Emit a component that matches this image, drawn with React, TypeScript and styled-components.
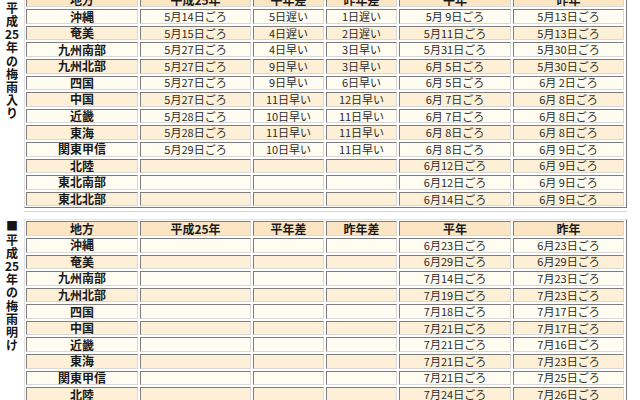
import React from 'react';
import styled, { createGlobalStyle } from 'styled-components';

type Tone = 'head' | 'light' | 'peach';

interface RowData {
  area: string;
  values: string[];
}

const GlobalStyle = createGlobalStyle`
  html, body {
    margin: 0;
    padding: 0;
    background: #ffffff;
  }
  body {
    font-family: "Noto Sans CJK JP", "Noto Sans", sans-serif;
    color: #222;
    overflow: hidden;
  }
`;

const Page = styled.div`
  display: flex;
  flex-direction: column;
  margin-top: -9.4px;
`;

const Section = styled.section<{ $gap?: number }>`
  display: flex;
  align-items: flex-start;
  margin-top: ${p => p.$gap ?? 0}px;
`;

const SideLabel = styled.div<{ $lift?: number }>`
  width: 24px;
  display: flex;
  flex-direction: column;
  align-items: center;
  margin-top: ${p => -(p.$lift ?? 0)}px;
  font-size: 12px;
  font-weight: bold;
  line-height: 13.2px;
  color: #151515;
`;

const TableWrap = styled.div`
  display: flex;
  flex-direction: column;
`;

const Table = styled.div`
  display: grid;
  grid-template-columns: 112px 111px 71px 71px 112px 111px;
  grid-auto-rows: 14.6px;
  gap: 2px;
  padding: 1px;
  border: 1px solid;
  border-color: #e2e2e2 #7a7a7a #7a7a7a #e2e2e2;
  background: #ffffff;
`;

const Rule = styled.div`
  width: 603px;
  height: 1px;
  margin-top: 3px;
  background: #d9d9d9;
`;

const toneBg: Record<Tone, string> = {
  head: '#fce5c3',
  light: '#fffcf1',
  peach: '#fdf0d7',
};

const Cell = styled.div<{ $tone: Tone; $bold?: boolean }>`
  display: flex;
  align-items: center;
  justify-content: center;
  box-sizing: border-box;
  border: 1px solid;
  border-color: #7d7d7d #d8d8d8 #d8d8d8 #7d7d7d;
  background: ${p => toneBg[p.$tone]};
  font-size: ${p => (p.$bold ? 12 : 11)}px;
  font-weight: ${p => (p.$bold ? 'bold' : 'normal')};
  line-height: 1;
  white-space: pre;
  color: ${p => (p.$bold ? '#1a1a1a' : '#2a2a2a')};
`;

const headers = ['地方', '平成25年', '平年差', '昨年差', '平年', '昨年'];

const onsetRows: RowData[] = [
  { area: '沖縄', values: ['5月14日ごろ', '5日遅い', '1日遅い', '5月 9日ごろ', '5月13日ごろ'] },
  { area: '奄美', values: ['5月15日ごろ', '4日遅い', '2日遅い', '5月11日ごろ', '5月13日ごろ'] },
  { area: '九州南部', values: ['5月27日ごろ', '4日早い', '3日早い', '5月31日ごろ', '5月30日ごろ'] },
  { area: '九州北部', values: ['5月27日ごろ', '9日早い', '3日早い', '6月 5日ごろ', '5月30日ごろ'] },
  { area: '四国', values: ['5月27日ごろ', '9日早い', '6日早い', '6月 5日ごろ', '6月 2日ごろ'] },
  { area: '中国', values: ['5月27日ごろ', '11日早い', '12日早い', '6月 7日ごろ', '6月 8日ごろ'] },
  { area: '近畿', values: ['5月28日ごろ', '10日早い', '11日早い', '6月 7日ごろ', '6月 8日ごろ'] },
  { area: '東海', values: ['5月28日ごろ', '11日早い', '11日早い', '6月 8日ごろ', '6月 8日ごろ'] },
  { area: '関東甲信', values: ['5月29日ごろ', '10日早い', '11日早い', '6月 8日ごろ', '6月 9日ごろ'] },
  { area: '北陸', values: ['', '', '', '6月12日ごろ', '6月 9日ごろ'] },
  { area: '東北南部', values: ['', '', '', '6月12日ごろ', '6月 9日ごろ'] },
  { area: '東北北部', values: ['', '', '', '6月14日ごろ', '6月 9日ごろ'] },
];

const endRows: RowData[] = [
  { area: '沖縄', values: ['', '', '', '6月23日ごろ', '6月23日ごろ'] },
  { area: '奄美', values: ['', '', '', '6月29日ごろ', '6月29日ごろ'] },
  { area: '九州南部', values: ['', '', '', '7月14日ごろ', '7月23日ごろ'] },
  { area: '九州北部', values: ['', '', '', '7月19日ごろ', '7月23日ごろ'] },
  { area: '四国', values: ['', '', '', '7月18日ごろ', '7月17日ごろ'] },
  { area: '中国', values: ['', '', '', '7月21日ごろ', '7月17日ごろ'] },
  { area: '近畿', values: ['', '', '', '7月21日ごろ', '7月16日ごろ'] },
  { area: '東海', values: ['', '', '', '7月21日ごろ', '7月23日ごろ'] },
  { area: '関東甲信', values: ['', '', '', '7月21日ごろ', '7月25日ごろ'] },
  { area: '北陸', values: ['', '', '', '7月24日ごろ', '7月26日ごろ'] },
  { area: '東北南部', values: ['', '', '', '7月25日ごろ', '7月28日ごろ'] },
  { area: '東北北部', values: ['', '', '', '7月28日ごろ', '7月29日ごろ'] },
];

const RainTable: React.FC<{ label: string[]; rows: RowData[]; gap?: number; lift?: number }> = ({
  label,
  rows,
  gap,
  lift,
}) => (
  <Section $gap={gap}>
    <SideLabel $lift={lift}>
      {label.map((ch, i) => (
        <span key={i}>{ch}</span>
      ))}
    </SideLabel>
    <TableWrap>
      <Table>
        {headers.map(h => (
          <Cell key={h} $tone="head" $bold>
            {h}
          </Cell>
        ))}
        {rows.map((row, r) => {
          const tone: Tone = r % 2 === 0 ? 'light' : 'peach';
          return (
            <React.Fragment key={row.area}>
              <Cell $tone={tone} $bold>
                {row.area}
              </Cell>
              {row.values.map((v, c) => (
                <Cell key={c} $tone={tone}>
                  {v}
                </Cell>
              ))}
            </React.Fragment>
          );
        })}
      </Table>
      <Rule />
    </TableWrap>
  </Section>
);

const App: React.FC = () => (
  <>
    <GlobalStyle />
    <Page>
      <RainTable label={['■', '平', '成', '25', '年', 'の', '梅', '雨', '入', 'り']} rows={onsetRows} lift={3} />
      <RainTable label={['■', '平', '成', '25', '年', 'の', '梅', '雨', '明', 'け']} rows={endRows} gap={7} />
    </Page>
  </>
);

export default App;
